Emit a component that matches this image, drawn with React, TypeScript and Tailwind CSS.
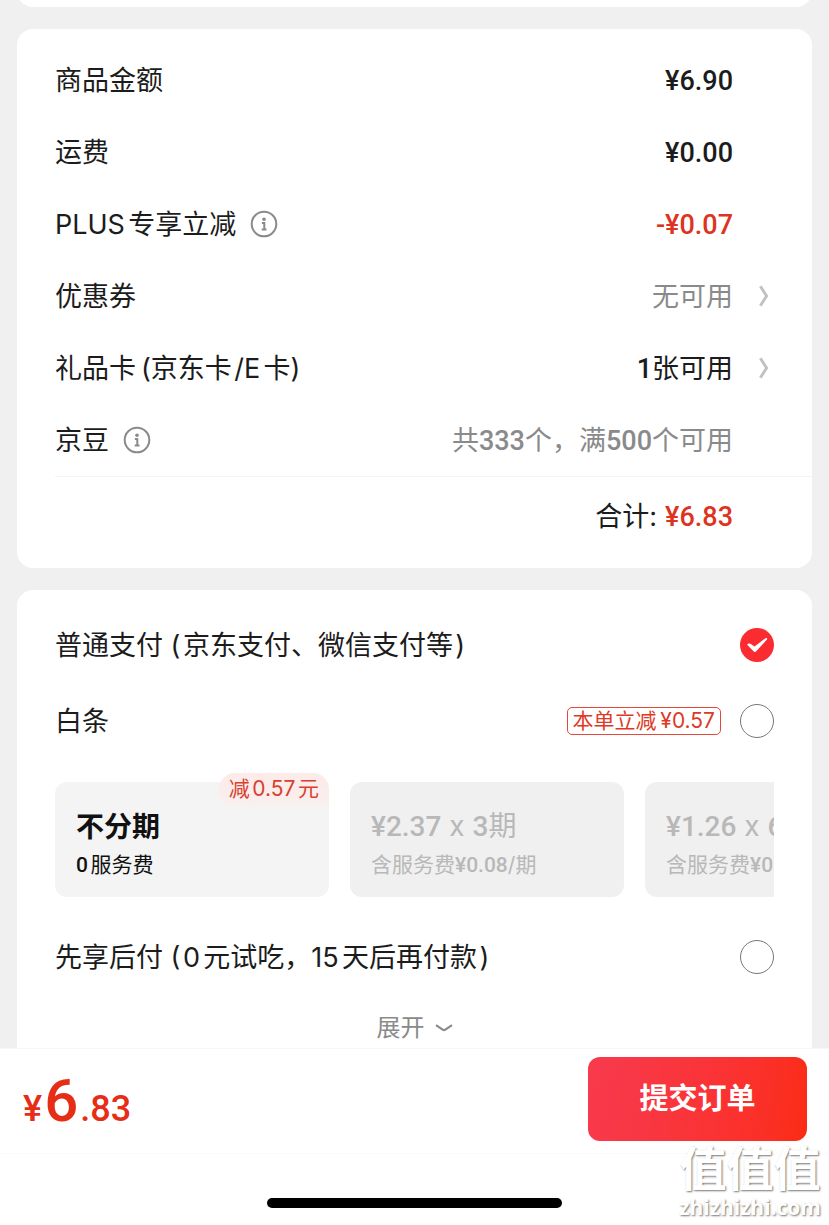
import React, { useState } from "react";
import clsx from "clsx";

const InfoIcon = () => (
  <svg viewBox="0 0 28 28" className="h-7 w-7 shrink-0" fill="none" stroke="#8a8a8a">
    <circle cx="14" cy="14" r="12.3" strokeWidth="2" />
    <circle cx="14" cy="9.3" r="1.8" fill="#8a8a8a" stroke="none" />
    <path d="M11.9 12.9h2.4v6.3M11.7 19.4h4.8" strokeWidth="2" />
  </svg>
);

const ArrowIcon = () => (
  <svg viewBox="0 0 12 24" className="h-6 w-3" fill="none" stroke="#c2c2c2" strokeWidth="3">
    <path d="M2.4 2.2 8.6 12 2.4 21.8" strokeLinejoin="round" />
  </svg>
);

const Num = ({ children }: { children: React.ReactNode }) => (
  <span className="font-['Roboto'] font-medium">{children}</span>
);

type RowProps = {
  label: string;
  info?: boolean;
  arrow?: boolean;
  className?: string;
  children: React.ReactNode;
};

const Row = ({ label, info, arrow, className, children }: RowProps) => (
  <div className="flex h-[72px] items-center pr-[38px]">
    <dt className="flex items-center gap-[14px]">
      <span className="pt-0.5">{label}</span>
      {info && (
        <button type="button" aria-label={`${label}说明`}>
          <InfoIcon />
        </button>
      )}
    </dt>
    <dd className={clsx("ml-auto pt-0.5 [text-autospace:no-autospace]", className)}>{children}</dd>
    <dd className="flex w-[41px] justify-end pr-1">
      {arrow && (
        <button type="button" aria-label={label}>
          <ArrowIcon />
        </button>
      )}
    </dd>
  </div>
);

type PayOptionProps = {
  label: string;
  tag?: string;
  checked: boolean;
  onSelect: () => void;
};

const PayOption = ({ label, tag, checked, onSelect }: PayOptionProps) => (
  <label className="flex h-[76px] cursor-pointer items-center pr-[38px]">
    <span className="mr-auto pt-0.5">{label}</span>
    {tag && (
      <span className="mr-[19px] rounded-[5px] border border-[#e5493c] px-[5px] text-[21px] leading-[26px] text-[#dd3a26]">
        {tag}
      </span>
    )}
    <span className="grid h-[34px] w-[34px] place-items-center">
      <input
        type="radio"
        name="pay"
        checked={checked}
        onChange={onSelect}
        className="col-start-1 row-start-1 h-[34px] w-[34px] appearance-none rounded-full border border-[#777] checked:border-0 checked:bg-[#fb2c31]"
      />
      {checked && (
        <svg viewBox="0 0 34 34" className="pointer-events-none col-start-1 row-start-1 h-[34px] w-[34px]">
          <path
            d="M7.2 16.8c.7-1.6 2.4-1.7 3.6-.8l3.7 2.4 11-8.2c1-.6 2.1.3 1.5 1.3L16.2 23.3c-.7.9-2 .9-2.7 0z"
            fill="#fff"
          />
        </svg>
      )}
    </span>
  </label>
);

const plans = [
  {
    title: "不分期",
    fee: (
      <>
        <Num>0</Num>服务费
      </>
    ),
    tag: "减0.57元",
    active: true,
  },
  {
    title: (
      <>
        <Num>¥2.37</Num> x <Num>3</Num>期
      </>
    ),
    fee: (
      <>
        含服务费<Num>¥0.08</Num>/期
      </>
    ),
  },
  {
    title: (
      <>
        <Num>¥1.26</Num> x <Num>6</Num>期
      </>
    ),
    fee: (
      <>
        含服务费<Num>¥0.11</Num>/期
      </>
    ),
  },
];

const App = () => {
  const [pay, setPay] = useState("normal");

  return (
    <div className="relative flex h-screen flex-col bg-[#f0f0f0] font-['Inter','Noto_Sans_CJK_SC',sans-serif] text-[27px] leading-9 text-[#1c1c1c] [text-autospace:normal]">
      <main className="flex-1 overflow-y-auto px-[17px] [scrollbar-width:none]">
        <div className="-mt-[21px] h-7 rounded-b-2xl bg-white" />

        {/* Tutar detayları */}
        <section className="mt-[22px] rounded-2xl bg-white pt-[15px] pb-3 pl-[38px]">
          <dl>
            <Row label="商品金额">
              <Num>¥6.90</Num>
            </Row>
            <Row label="运费">
              <Num>¥0.00</Num>
            </Row>
            <Row label="PLUS专享立减" info className="text-[#dd3320]">
              <Num>-¥0.07</Num>
            </Row>
            <Row label="优惠券" arrow className="text-[#8a8a8a]">
              无可用
            </Row>
            <Row label={"礼品卡\u2009(京东卡\u200a/E卡)"} arrow>
              <Num>1</Num>张可用
            </Row>
            <Row label="京豆" info className="text-[#8a8a8a]">
              共<Num>333</Num>个，满<Num>500</Num>个可用
            </Row>
          </dl>
          <p className="flex h-20 items-center justify-end border-t border-[#f4f4f4] pr-[79px]">
            合计:
            <span className="ml-2 text-[#dd3320]">
              <Num>¥6.83</Num>
            </span>
          </p>
        </section>

        {/* Ödeme yöntemleri */}
        <section className="mt-[22px] rounded-t-2xl bg-white pt-[17px] pl-[38px]">
          <PayOption
            label={"普通支付 (\u200a京东支付、微信支付等\u200a)"}
            checked={pay === "normal"}
            onSelect={() => setPay("normal")}
          />
          <PayOption
            label="白条"
            tag={"本单立减\u2009¥0.57"}
            checked={pay === "baitiao"}
            onSelect={() => setPay("baitiao")}
          />

          <div className="mr-[38px] flex gap-[21px] overflow-x-auto pt-[23px] pb-[22px] [scrollbar-width:none]">
            {plans.map((plan, i) => (
              <button
                key={i}
                type="button"
                className={clsx(
                  "relative h-[115px] w-[274px] shrink-0 rounded-xl px-[21px] pt-[10px] text-left",
                  plan.active ? "bg-[#f4f4f4] text-[#111]" : "bg-[#f0f0f0] text-[#b8b8b8]"
                )}
              >
                {plan.tag && (
                  <span className="absolute -top-[9px] right-0 rounded-t-2xl rounded-bl-2xl bg-linear-to-b from-[#fdeae8] to-[#f8f0ef] px-[10px] pb-0.5 text-[21px] leading-8 text-[#d8402f]">
                    {plan.tag}
                  </span>
                )}
                <span
                  className={clsx(
                    "block text-[28px] leading-10 [text-autospace:no-autospace]",
                    plan.active && "font-bold"
                  )}
                >
                  {plan.title}
                </span>
                <span className="block text-[21px] leading-9">{plan.fee}</span>
              </button>
            ))}
          </div>

          <PayOption
            label={"先享后付 (\u200a0元试吃，15天后再付款\u200a)"}
            checked={pay === "later"}
            onSelect={() => setPay("later")}
          />

          <button
            type="button"
            className="flex h-[66px] w-full items-center justify-center gap-[10px] pr-[38px] text-[24px] text-[#8a8a8a]"
          >
            展开
            <svg viewBox="0 0 18 8" className="h-2 w-[18px]" fill="none" stroke="#8a8a8a" strokeWidth="2.2">
              <path d="M1 1.2 8 5.8q1 .6 2 0L17 1.2" />
            </svg>
          </button>
        </section>
      </main>

      <footer className="shrink-0 border-t border-[#f7f7f7] bg-white">
        <div className="flex items-center justify-between border-b border-[#fafafa] pt-2 pr-[22px] pb-3 pl-[23px]">
          <p className="pt-1 font-['Roboto'] text-[36px] leading-none font-medium text-[#e62e17]">
            ¥<span className="mx-0.5 text-[60px]">6</span>.83
          </p>
          <button
            type="button"
            className="h-[84px] w-[219px] rounded-xl bg-linear-100 from-[#f83a4e] to-[#fb2c14] text-[29px] font-bold text-white"
          >
            提交订单
          </button>
        </div>
        <div className="flex h-[71px] justify-center pt-[44px]">
          <div className="h-[10px] w-[295px] rounded-full bg-black" />
        </div>
      </footer>

      <div className="pointer-events-none absolute right-2 bottom-[6px] text-center font-bold text-white [text-shadow:1px_1px_2px_#777]">
        <p className="text-[47px] leading-[52px]">值值值</p>
        <p className="font-['Open_Sans'] text-[21px] leading-6">zhizhizhi.com</p>
      </div>
    </div>
  );
};

export default App;
